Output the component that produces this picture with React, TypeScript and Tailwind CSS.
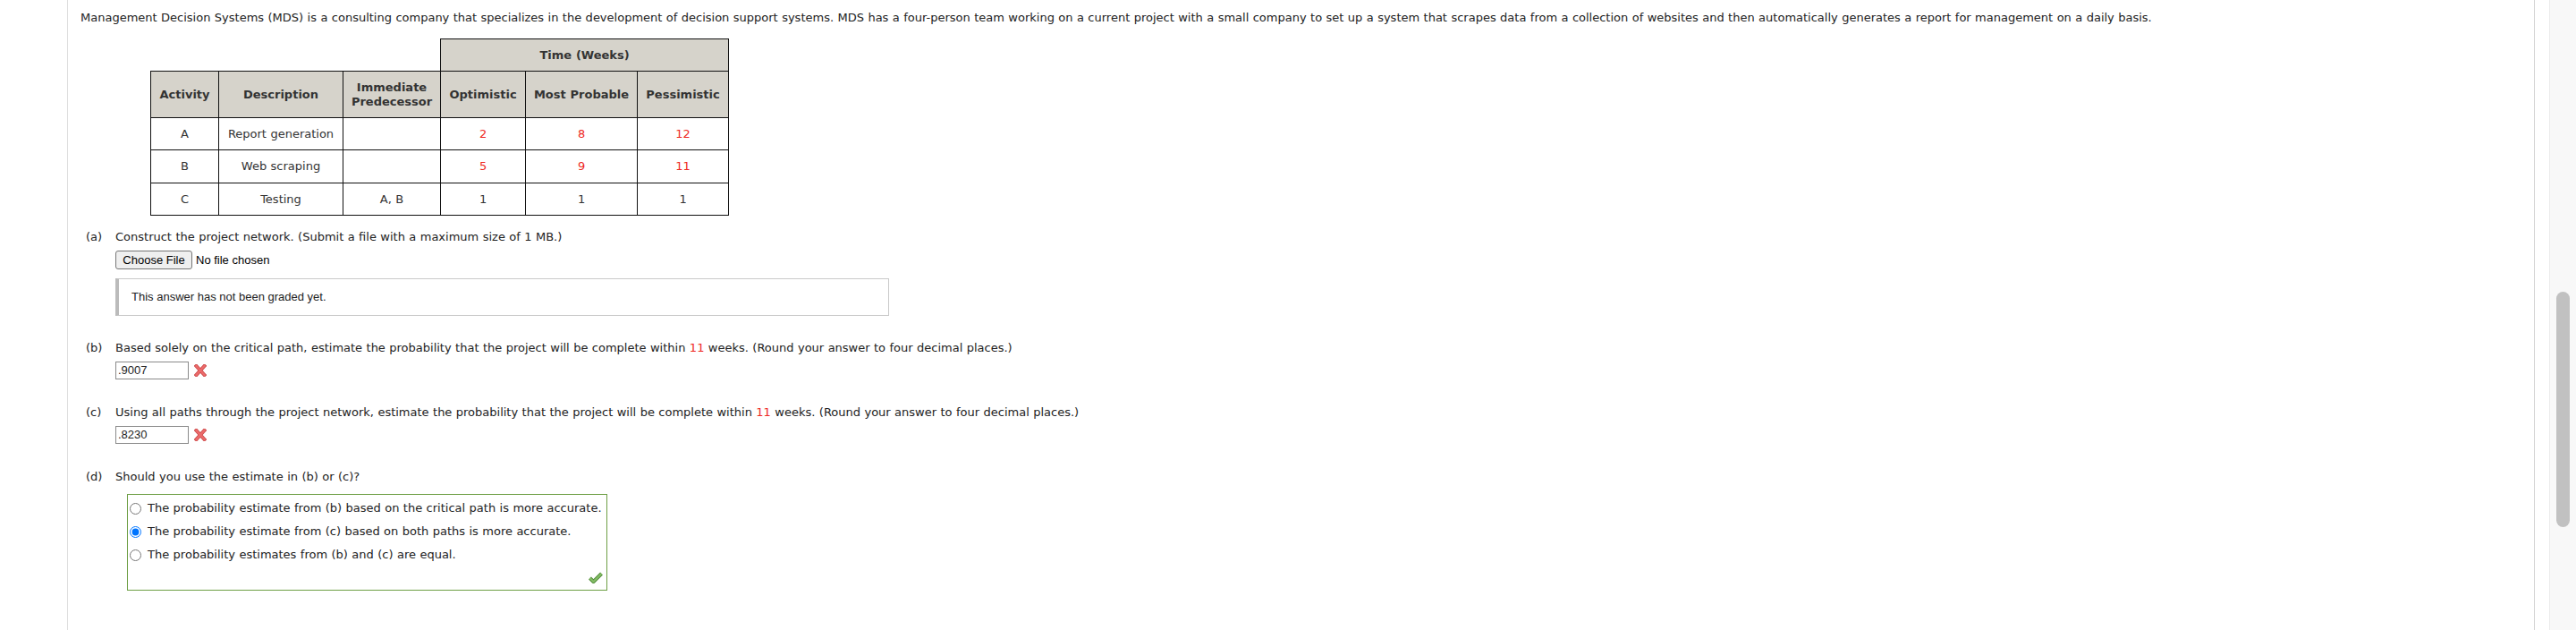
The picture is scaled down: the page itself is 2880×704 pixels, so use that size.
const verdana = "font-['DejaVu_Sans',Verdana,sans-serif] [word-spacing:0.3px]";
const arial = "font-['Liberation_Sans',Arial,sans-serif]";

const rows = [
  { activity: "A", description: "Report generation", predecessor: "", times: ["2", "8", "12"], red: true },
  { activity: "B", description: "Web scraping", predecessor: "", times: ["5", "9", "11"], red: true },
  { activity: "C", description: "Testing", predecessor: "A, B", times: ["1", "1", "1"], red: false }
];

const options = [
  "The probability estimate from (b) based on the critical path is more accurate.",
  "The probability estimate from (c) based on both paths is more accurate.",
  "The probability estimates from (b) and (c) are equal."
];

function WrongMark() {
  return (
    <svg width="14" height="14" viewBox="0 0 14 14" className="ml-[6px] shrink-0">
      <path d="M2.5 2 L11.5 12 M11.5 2 L2.5 12" stroke="#c94646" strokeWidth="4" strokeLinecap="square" />
      <path d="M2.5 2 L11.5 12 M11.5 2 L2.5 12" stroke="#ec6b6b" strokeWidth="2.4" strokeLinecap="square" />
    </svg>
  );
}

function RightMark() {
  return (
    <svg width="16" height="13" viewBox="0 0 16 13">
      <path d="M1.5 7 L5.5 11 L14.5 2" fill="none" stroke="#4f8a37" strokeWidth="4" strokeLinejoin="round" />
      <path d="M1.5 7 L5.5 11 L14.5 2" fill="none" stroke="#84bd66" strokeWidth="2.2" strokeLinejoin="round" />
    </svg>
  );
}

function Part({ label, children }: { label: string; children: React.ReactNode }) {
  return (
    <div className={`flex h-[16px] items-center whitespace-nowrap pl-[6px] text-[13px] leading-[16px] text-[#222] ${verdana}`}>
      <span className="w-[33px] shrink-0">{label}</span>
      <span>{children}</span>
    </div>
  );
}

function AnswerInput({ value }: { value: string }) {
  return (
    <div className="mt-[7px] flex items-center pl-[39px]">
      <div
        className={`flex h-[20px] w-[82px] items-center border border-[#8a8a8a] bg-white pl-[2px] text-[13px] text-[#222] ${arial}`}
      >
        {value}
      </div>
      <WrongMark />
    </div>
  );
}

export default function App() {
  const cell = "border border-[#111]";
  const head = `${cell} bg-[#d6d3cb] font-bold text-[#333]`;

  return (
    <div className="flex h-screen w-full overflow-hidden bg-white">
      <div className="w-[75px] shrink-0" />
      <div className="w-px shrink-0 bg-[#dedede]" />

      <div className="min-w-0 flex-1 pl-[14px] pt-[12px]">
        <p className={`whitespace-nowrap text-[13px] leading-[16px] text-[#222] ${verdana}`}>
          Management Decision Systems (MDS) is a consulting company that specializes in the development of decision
          support systems. MDS has a four-person team working on a current project with a small company to set up a
          system that scrapes data from a collection of websites and then automatically generates a report for
          management on a daily basis.
        </p>

        <table
          className={`ml-[78px] mt-[15px] w-[647px] table-fixed border-collapse text-center text-[13px] leading-[16px] text-[#333] ${verdana}`}
        >
          <colgroup>
            <col className="w-[76px]" />
            <col className="w-[139px]" />
            <col className="w-[109px]" />
            <col className="w-[95px]" />
            <col className="w-[125px]" />
            <col className="w-[102px]" />
          </colgroup>
          <thead>
            <tr className="h-[36px]">
              <th colSpan={3} className="border-0 bg-white" />
              <th colSpan={3} className={head}>
                Time (Weeks)
              </th>
            </tr>
            <tr className="h-[52px]">
              <th className={head}>Activity</th>
              <th className={head}>Description</th>
              <th className={head}>
                Immediate
                <br />
                Predecessor
              </th>
              <th className={head}>Optimistic</th>
              <th className={head}>Most Probable</th>
              <th className={head}>Pessimistic</th>
            </tr>
          </thead>
          <tbody>
            {rows.map((row, index) => (
              <tr key={row.activity} className={index === 1 ? "h-[37px]" : "h-[36px]"}>
                <td className={cell}>{row.activity}</td>
                <td className={cell}>{row.description}</td>
                <td className={cell}>{row.predecessor}</td>
                {row.times.map((time, i) => (
                  <td key={i} className={`${cell} ${row.red ? "text-[#ee2a24]" : ""}`}>
                    {time}
                  </td>
                ))}
              </tr>
            ))}
          </tbody>
        </table>

        <div className="mt-[16px]">
          <Part label="(a)">Construct the project network. (Submit a file with a maximum size of 1 MB.)</Part>
        </div>
        <div className={`mt-[7px] flex items-center pl-[39px] text-[13px] text-black ${arial}`}>
          <button
            type="button"
            className="flex h-[21px] w-[86px] items-center justify-center rounded-[3px] border border-[#767676] bg-[#efefef]"
          >
            Choose File
          </button>
          <span className="ml-[4px]">No file chosen</span>
        </div>
        <div className="ml-[39px] mt-[10px] flex h-[42px] w-[865px] items-center border border-l-[4px] border-[#c9c9c9] border-l-[#bbbbbb] pl-[14px]">
          <span className={`text-[13px] text-[#222] ${arial}`}>This answer has not been graded yet.</span>
        </div>

        <div className="mt-[28px]">
          <Part label="(b)">
            Based solely on the critical path, estimate the probability that the project will be complete within{" "}
            <span className="text-[#ee2a24]">11</span> weeks. (Round your answer to four decimal places.)
          </Part>
        </div>
        <AnswerInput value=".9007" />

        <div className="mt-[29px]">
          <Part label="(c)">
            Using all paths through the project network, estimate the probability that the project will be complete
            within <span className="text-[#ee2a24]">11</span> weeks. (Round your answer to four decimal places.)
          </Part>
        </div>
        <AnswerInput value=".8230" />

        <div className="mt-[29px]">
          <Part label="(d)">Should you use the estimate in (b) or (c)?</Part>
        </div>
        <div className="ml-[52px] mt-[11px] flex h-[108px] w-[537px] flex-col border border-[#6e9f45] pl-[2px] pt-[2px]">
          {options.map((text, i) => (
            <label
              key={i}
              className={`flex h-[26px] items-center whitespace-nowrap text-[13px] text-[#222] ${verdana}`}
            >
              <input
                type="radio"
                name="estimate"
                defaultChecked={i === 1}
                className="m-0 h-[13px] w-[13px] shrink-0"
              />
              <span className="ml-[7px]">{text}</span>
            </label>
          ))}
          <div className="mt-auto flex justify-end pb-[7px] pr-[4px]">
            <RightMark />
          </div>
        </div>
      </div>

      <div className="w-px shrink-0 bg-[#d2d2d2]" />
      <div className="w-[16px] shrink-0" />
      <div className="w-[30px] shrink-0 border-l border-[#ebebeb] bg-[#f8f8f8] pl-[7px] pt-[326px]">
        <div className="h-[263px] w-[15px] rounded-full bg-[#c1c1c1]" />
      </div>
    </div>
  );
}
